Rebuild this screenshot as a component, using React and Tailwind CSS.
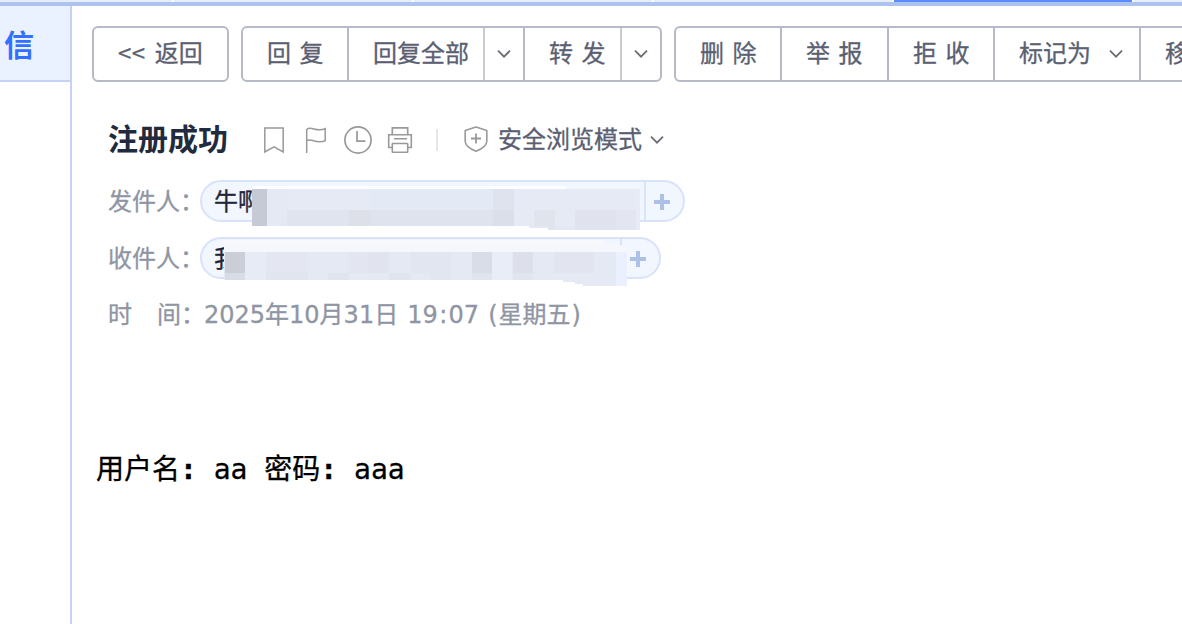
import clsx from 'clsx'

const tabWidths = ['w-[172px]', 'w-[238px]', 'w-[238px]', 'w-[238px]', 'w-[238px]', 'w-[50px]']

// [x, y, width, height, colour], relative to each mosaic's top left corner
const senderMosaic = [
  [0, 0, 314, 3, '#fdfeff'],
  [0, 3, 388, 37, '#e5eaf5'],
  [277, 40, 111, 2, '#e4e8f3'],
  [296, 42, 92, 2, '#e4e8f3'],
  [0, 3, 15, 37, '#c6cad4'],
  [15, 3, 20, 37, '#e4e9f4'],
  [35, 24, 21, 16, '#e0e4ee'],
  [56, 24, 41, 16, '#e0e4ee'],
  [97, 24, 21, 16, '#dde0e9'],
  [118, 24, 123, 16, '#dfe3ed'],
  [118, 3, 62, 21, '#e3eaf6'],
  [179, 3, 62, 21, '#e3eaf5'],
  [241, 3, 21, 21, '#dfe3ed'],
  [241, 24, 21, 16, '#dbdfe9'],
  [262, 3, 20, 21, '#e5eaf6'],
  [282, 24, 21, 16, '#e0e4ed'],
  [296, 40, 7, 4, '#e0e4ed'],
  [323, 24, 41, 20, '#e0e3ed'],
  [364, 24, 20, 20, '#e3e6f1'],
  [384, 3, 4, 41, '#e7ebf5'],
]

const receiverMosaic = [
  [0, 0, 380, 12, '#f7f8fc'],
  [0, 5, 403, 7, '#f5f7fc'],
  [0, 12, 403, 28, '#e5e9f4'],
  [339, 40, 64, 2, '#e5e9f5'],
  [351, 42, 52, 2, '#e5e9f5'],
  [359, 44, 44, 2, '#e5e9f5'],
  [1, 12, 20, 21, '#cbced7'],
  [1, 33, 20, 7, '#d8dce6'],
  [21, 12, 21, 28, '#e6ebf6'],
  [42, 33, 42, 7, '#e1e5ef'],
  [42, 12, 42, 21, '#e4e7f2'],
  [104, 33, 21, 7, '#e0e4ee'],
  [124, 12, 20, 21, '#e3e6f0'],
  [144, 12, 21, 21, '#e1e4ee'],
  [165, 33, 21, 7, '#e0e4ee'],
  [186, 12, 20, 21, '#e2e6f0'],
  [206, 12, 21, 28, '#e2e6f0'],
  [248, 12, 20, 21, '#d9dde7'],
  [248, 33, 20, 7, '#e0e4ee'],
  [268, 12, 20, 28, '#e8edf8'],
  [289, 12, 20, 21, '#dde0ea'],
  [289, 33, 20, 7, '#e1e5f0'],
  [330, 12, 40, 21, '#e2e5ef'],
  [392, 12, 11, 34, '#eaf0fe'],
]

function Mosaic({ cells, className }) {
  return (
    <div className={clsx('absolute', className)} aria-hidden="true">
      {cells.map(([left, top, width, height, background], i) => (
        <span key={i} className="absolute" style={{ left, top, width, height, background }} />
      ))}
    </div>
  )
}

function Chevron() {
  return (
    <svg width="14" height="10" viewBox="0 0 14 10" fill="none" stroke="#6b6d75" strokeWidth="1.8">
      <path d="m1 1.7 6 6 6-6" />
    </svg>
  )
}

function ToolButton({ children, className }) {
  return (
    <button
      className={clsx(
        'flex h-full shrink-0 items-center whitespace-pre border-r-2 pb-1 pl-6 text-left last:border-r-0',
        className
      )}
    >
      {children}
    </button>
  )
}

function DropButton({ className }) {
  return (
    <button className={clsx('flex h-full shrink-0 items-center justify-center border-[#b5b9c8]', className)}>
      <Chevron />
    </button>
  )
}

function ButtonGroup({ children, className }) {
  return (
    <div className={clsx('flex h-14 shrink-0 rounded-md border-2 border-[#b5b9c8]', className)}>
      {children}
    </div>
  )
}

function Toolbar() {
  return (
    <div className="flex gap-3 overflow-hidden pt-5 pl-5 text-[24px] leading-[36px] text-[#5a6072] [-webkit-text-stroke:.3px]">
      <ButtonGroup className="w-[137px]">
        <ToolButton className="w-full gap-[9px]">
          <span className="tracking-[.5px]">&lt;&lt;</span>
          <span>返回</span>
        </ToolButton>
      </ButtonGroup>
      <ButtonGroup className="w-[421px]">
        <ToolButton className="w-[106px] border-[#b5b9c8] [word-spacing:3px]">回 复</ToolButton>
        <ToolButton className="w-[136px] border-[#cbcbcb]">回复全部</ToolButton>
        <DropButton className="w-10 border-r-2" />
        <ToolButton className="w-[97px] border-[#cbcbcb] [word-spacing:3px]">转 发</ToolButton>
        <DropButton className="w-[38px]" />
      </ButtonGroup>
      <ButtonGroup className="w-[620px]">
        <ToolButton className="w-[106px] border-[#b5b9c8] [word-spacing:3px]">删 除</ToolButton>
        <ToolButton className="w-[107px] border-[#b5b9c8] [word-spacing:3px]">举 报</ToolButton>
        <ToolButton className="w-[106px] border-[#b5b9c8] [word-spacing:3px]">拒 收</ToolButton>
        <ToolButton className="w-[146px] gap-[18px] border-[#b5b9c8]">
          标记为
          <span className="pt-1">
            <Chevron />
          </span>
        </ToolButton>
        <ToolButton className="w-[146px]">移动到</ToolButton>
      </ButtonGroup>
    </div>
  )
}

function SubjectRow() {
  return (
    <div className="flex h-10 items-center pl-9">
      <h1 className="w-[152px] pb-[5px] text-[30px] leading-[35px] font-bold text-[#222a3d]">注册成功</h1>
      <div className="flex h-7 gap-[14px] text-[#999]">
        <svg width="28" height="28" viewBox="0 0 28 28" fill="none" stroke="currentColor" strokeWidth="1.5">
          <path d="M4.8 2h18.4v24L14 20.8 4.8 26z" />
        </svg>
        <svg width="28" height="28" viewBox="0 0 28 28" fill="none" stroke="currentColor" strokeWidth="1.5">
          <path d="M4.7 27V3.500c5-4 9 3 18.500-.8v12c-9.500 3.800-13.500-3.200-18.500 0" />
        </svg>
        <svg width="28" height="28" viewBox="0 0 28 28" fill="none" stroke="currentColor" strokeWidth="1.7">
          <circle cx="14" cy="14" r="13.1" />
          <path d="M13 5v10.200h8.500" />
        </svg>
        <svg width="28" height="28" viewBox="0 0 28 28" fill="none" stroke="currentColor" strokeWidth="1.6">
          <path d="M6.300 8.500V1.900h15.400v6.600M6 21.500H2.700V8.700h22.600v12.800H22M8 12.800h13" />
          <rect x="6.300" y="17.500" width="15.400" height="8.700" rx=".5" />
        </svg>
      </div>
      <div className="ml-[22px] h-[22px] w-[2px] bg-[#e3e5ef]" />
      <svg className="ml-[26px] mb-[2px]" width="24" height="26" viewBox="0 0 24 26" fill="none" stroke="#999" strokeWidth="1.6">
        <path d="M12 1 22.8 4.500v10.700c0 5-5.800 8-10.800 10-5-2-10.800-5-10.800-10V4.500z" strokeLinejoin="round" />
        <path d="M12 7.500v10M7 12.500h10" strokeWidth="1.8" />
      </svg>
      <span className="mr-2 ml-[10px] pb-1 text-[24px] leading-[36px] text-[#5a6072] [-webkit-text-stroke:.3px]">
        安全浏览模式
      </span>
      <Chevron />
    </div>
  )
}

function AddressChip({ name, className, children }) {
  return (
    <div
      className={clsx(
        'relative flex h-[42px] rounded-full border-2 border-[#d8e2f8] bg-[#f1f6ff] pl-3 leading-[36px] text-[#1f2637]',
        className
      )}
    >
      <span className="flex-1 overflow-hidden whitespace-nowrap">{name}</span>
      <span className="flex w-[39px] items-center border-l-2 border-[#d8e2f8] pt-[2px] pl-[7px]">
        <svg width="18" height="18" viewBox="0 0 18 18" stroke="#adc1e8" strokeWidth="4">
          <path d="M9 1v16M1 9h16" />
        </svg>
      </span>
      {children}
    </div>
  )
}

function Field({ label, children, className }) {
  return (
    <div
      className={clsx(
        'flex h-[42px] pl-9 text-[24px] leading-[40px] text-[#8f95a3] [-webkit-text-stroke:.3px]',
        className
      )}
    >
      <span className="w-[92px] shrink-0 whitespace-nowrap">{label}</span>
      {children}
    </div>
  )
}

export default function App() {
  return (
    <div className="flex h-[624px] w-[1182px] flex-col overflow-hidden bg-white font-['Noto_Sans_CJK_SC',sans-serif]">
      <div className="flex h-[6px] shrink-0 gap-[2px] overflow-hidden border-b-4 border-[#adc2ec]">
        {tabWidths.map((width, i) => (
          <div key={i} className={clsx('h-[2px] shrink-0', width, i === 4 ? 'bg-[#5b8cff]' : 'bg-[#e6eefd]')} />
        ))}
      </div>
      <div className="flex min-h-0 flex-1">
        <aside className="w-[72px] shrink-0 border-r-2 border-[#c3d3f5]">
          <div className="h-[76px] border-b-2 border-[#c3d3f5] bg-[#eaf1ff] pl-1 text-[30px] leading-[74px] font-bold text-[#3370ff]">
            信
          </div>
        </aside>
        <main className="min-w-0 flex-1">
          <Toolbar />
          <section className="pt-[38px]">
            <SubjectRow />
            <Field label="发件人：" className="mt-5">
              <AddressChip name="牛啊" className="w-[485px]">
                <Mosaic cells={senderMosaic} className="top-1 left-[50px]" />
              </AddressChip>
            </Field>
            <Field label="收件人：" className="mt-[15px]">
              <AddressChip name="我" className="w-[461px]">
                <Mosaic cells={receiverMosaic} className="top-[1px] left-[22px]" />
              </AddressChip>
            </Field>
            <Field
              label={
                <>
                  时<span className="ml-[1px]">　间：</span>
                </>
              }
              className="mt-[14px]"
            >
              <span className="ml-1 pt-[1px] whitespace-nowrap font-['DejaVu_Sans','Noto_Sans_CJK_SC',sans-serif] leading-[42px] [word-spacing:1.5px]">
                2025年10月31日 19<span className="px-[1.3px]">:</span>07 (<span className="px-[1px]">星期五</span>)
              </span>
            </Field>
          </section>
          <p className="mt-[115px] pl-6 whitespace-pre text-[28px] leading-10 text-black font-['DejaVu_Sans_Mono','Noto_Sans_CJK_SC',monospace] [-webkit-text-stroke:.3px]">
            用户名<span className="font-bold">:</span> aa 密码<span className="font-bold">:</span> aaa
          </p>
        </main>
      </div>
    </div>
  )
}
